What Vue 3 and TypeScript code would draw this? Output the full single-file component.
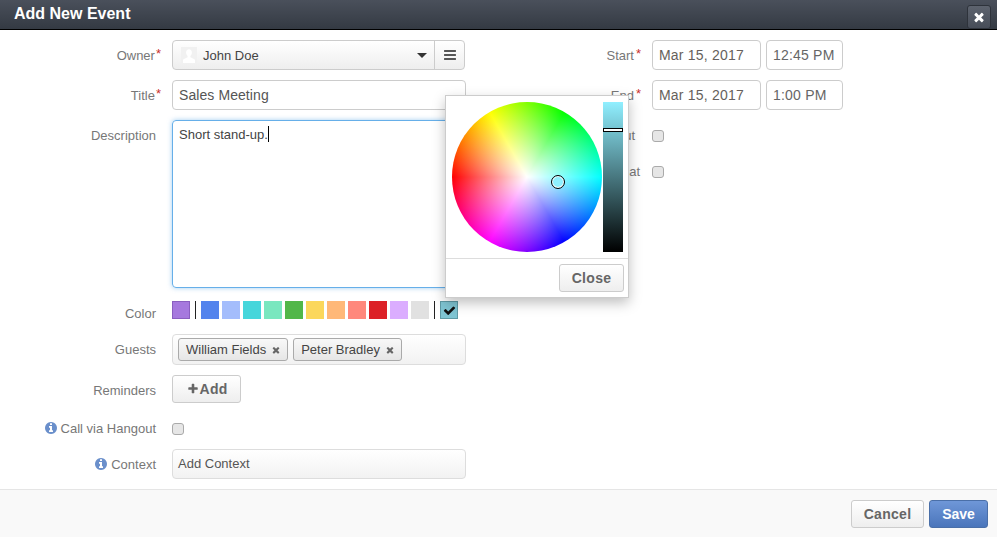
<script setup lang="ts">
const icons = {
  times: 'M1490 1322q0 40-28 68l-136 136q-28 28-68 28t-68-28l-294-294-294 294q-28 28-68 28t-68-28l-136-136q-28-28-28-68t28-68l294-294-294-294q-28-28-28-68t28-68l136-136q28-28 68-28t68 28l294 294 294-294q28-28 68-28t68 28l136 136q28 28 28 68t-28 68l-294 294 294 294q28 28 28 68z',
  check: 'M1671 566q0 40-28 68l-724 724-136 136q-28 28-68 28t-68-28l-136-136-362-362q-28-28-28-68t28-68l136-136q28-28 68-28t68 28l294 295 656-657q28-28 68-28t68 28l136 136q28 28 28 68z',
  plus: 'M1600 736v192q0 40-28 68t-68 28h-416v416q0 40-28 68t-68 28h-192q-40 0-68-28t-28-68v-416h-416q-40 0-68-28t-28-68v-192q0-40 28-68t68-28h416v-416q0-40 28-68t68-28h192q40 0 68 28t28 68v416h416q40 0 68 28t28 68z',
  info: 'M1152 1376v-160q0-14-9-23t-23-9h-96v-512q0-14-9-23t-23-9h-320q-14 0-23 9t-9 23v160q0 14 9 23t23 9h96v320h-96q-14 0-23 9t-9 23v160q0 14 9 23t23 9h448q14 0 23-9t9-23zm-128-896v-160q0-14-9-23t-23-9h-192q-14 0-23 9t-9 23v160q0 14 9 23t23 9h192q14 0 23-9t9-23zm640 416q0 209-103 385.5t-279.5 279.5-385.5 103-385.5-103-279.5-279.5-103-385.5 103-385.5 279.5-279.5 385.5-103 385.5 103 279.5 279.5 103 385.5z',
  bars: 'M1664 1344v128q0 26-19 45t-45 19h-1408q-26 0-45-19t-19-45v-128q0-26 19-45t45-19h1408q26 0 45 19t19 45zm0-512v128q0 26-19 45t-45 19h-1408q-26 0-45-19t-19-45v-128q0-26 19-45t45-19h1408q26 0 45 19t19 45zm0-512v128q0 26-19 45t-45 19h-1408q-26 0-45-19t-19-45v-128q0-26 19-45t45-19h1408q26 0 45 19t19 45z',
}
const firstSwatch = '#a679de'
const swatches: string[] = ['#5484ed', '#a4bdfc', '#46d6db', '#7ae7bf', '#51b749', '#fbd75b', '#ffb878', '#ff887c', '#dc2127', '#dbadff', '#e1e1e1']
const guests: string[] = ['William Fields', 'Peter Bradley']
</script>

<template>
  <div class="dialog">
    <header class="head">
      <h1 class="head-title">Add New Event</h1>
      <button class="head-close" type="button">
        <svg viewBox="0 0 1792 1792" class="ico-close"><path :d="icons.times" /></svg>
      </button>
    </header>

    <main class="body">
      <section class="col-left">
        <div class="row">
          <label class="lab">Owner<span class="req">*</span></label>
          <div class="owner">
            <div class="owner-select">
              <svg class="avatar" viewBox="0 0 16 16">
                <rect width="16" height="16" fill="#f1f1f1" />
                <path d="M8 2.200c1.800 0 2.900 1.500 2.900 3.400 0 1.500-.7 2.800-1.500 3.500v1.200l3.600 1.600c.8.4 1 1 1 1.600V16H2v-2.500c0-.6.2-1.200 1-1.600l3.600-1.600V9.100C5.800 8.400 5.100 7.100 5.100 5.600 5.100 3.700 6.200 2.200 8 2.200z" fill="#fff" />
              </svg>
              <span class="owner-name">John Doe</span>
              <span class="caret"></span>
            </div>
            <div class="owner-menu">
              <svg viewBox="0 0 1792 1792" class="ico-bars"><path :d="icons.bars" /></svg>
            </div>
          </div>
        </div>

        <div class="row">
          <label class="lab">Title<span class="req">*</span></label>
          <div class="input wide">Sales Meeting</div>
        </div>

        <div class="row row-top">
          <label class="lab lab-desc">Description</label>
          <div class="area">Short stand-up.<span class="text-caret"></span></div>
        </div>

        <div class="row row-color">
          <label class="lab lab-color">Color</label>
          <div class="swatches">
            <span class="swatch swatch-sel" :style="{ background: firstSwatch }"></span>
            <span class="sep"></span>
            <span v-for="c in swatches" :key="c" class="swatch" :style="{ background: c }"></span>
            <span class="sep sep-b"></span>
            <span class="swatch swatch-custom">
              <svg viewBox="0 0 1792 1792" class="ico-check"><path :d="icons.check" /></svg>
            </span>
          </div>
        </div>

        <div class="row row-guests">
          <label class="lab">Guests</label>
          <div class="guests">
            <span v-for="g in guests" :key="g" class="tag">
              {{ g }}
              <svg viewBox="0 0 1792 1792" class="ico-tag"><path :d="icons.times" /></svg>
            </span>
          </div>
        </div>

        <div class="row row-add">
          <label class="lab lab-rem">Reminders</label>
          <button class="btn btn-add" type="button">
            <svg viewBox="0 0 1792 1792" class="ico-plus"><path :d="icons.plus" /></svg>Add
          </button>
        </div>

        <div class="row row-check">
          <label class="lab">
            <svg viewBox="0 0 1792 1792" class="ico-info"><path :d="icons.info" /></svg>Call via Hangout
          </label>
          <span class="check"></span>
        </div>

        <div class="row">
          <label class="lab">
            <svg viewBox="0 0 1792 1792" class="ico-info"><path :d="icons.info" /></svg>Context
          </label>
          <div class="context">Add Context</div>
        </div>
      </section>

      <section class="col-right">
        <div class="row">
          <label class="lab-r">Start<span class="req">*</span></label>
          <div class="input date">Mar 15, 2017</div>
          <div class="input time">12:45 PM</div>
        </div>
        <div class="row">
          <label class="lab-r">End<span class="req">*</span></label>
          <div class="input date">Mar 15, 2017</div>
          <div class="input time">1:00 PM</div>
        </div>
        <div class="row row-opt">
          <label class="lab-r lab-out">Time Out</label>
          <span class="check"></span>
        </div>
        <div class="row row-opt">
          <label class="lab-r lab-rep">Repeat</label>
          <span class="check"></span>
        </div>
      </section>

      <div class="picker">
        <div class="picker-main">
          <div class="wheel"><span class="wheel-dot"></span></div>
          <div class="slider"><span class="slider-handle"></span></div>
        </div>
        <div class="picker-foot">
          <button class="btn btn-close" type="button">Close</button>
        </div>
      </div>
    </main>

    <footer class="foot">
      <button class="btn btn-cancel" type="button">Cancel</button>
      <button class="btn btn-save" type="button">Save</button>
    </footer>
  </div>
</template>

<style>
html, body { margin: 0; background: #fff; }
</style>

<style scoped>
.dialog {
  width: 997px;
  height: 537px;
  display: flex;
  flex-direction: column;
  overflow: hidden;
  background: #fff;
  font-family: "Liberation Sans", Arial, sans-serif;
  font-size: 13px;
  color: #555;
}
.head {
  height: 29px;
  flex: none;
  border-bottom: 1px solid #000;
  background: linear-gradient(#4a505b, #343a43);
  display: flex;
  align-items: flex-start;
  justify-content: space-between;
  padding: 0 6px 0 14px;
}
.head-title {
  margin: 0;
  font-size: 16px;
  line-height: 28px;
  font-weight: 700;
  color: #fff;
}
.head-close {
  width: 24px;
  height: 24px;
  margin-top: 5px;
  padding: 0;
  display: flex;
  align-items: center;
  justify-content: center;
  border: 1px solid #2e333b;
  border-radius: 3px;
  background: linear-gradient(#5d636e, #474d58);
}
.ico-close { width: 14px; height: 14px; fill: #fff; }

.body {
  flex: 1;
  position: relative;
  display: flex;
  padding-top: 10px;
  min-height: 0;
}
.col-left { width: 466px; flex: none; display: flex; flex-direction: column; gap: 10px; }
.col-right { display: flex; flex-direction: column; gap: 10px; }

.row { display: flex; align-items: center; min-height: 30px; }
.row-top { align-items: flex-start; }
.lab {
  width: 156px;
  margin-right: 16px;
  flex: none;
  text-align: right;
  color: #777;
  white-space: nowrap;
}
.lab-desc { padding-top: 8px; }
.lab-rem { position: relative; top: 1px; }
.req {
  color: #c9302c;
  margin-left: 1px;
  margin-right: -5px;
  position: relative;
  top: -2px;
  font-size: 13px;
}
.lab-r .req { margin-left: 2px; }

.owner {
  width: 293px;
  height: 30px;
  box-sizing: border-box;
  border: 1px solid #ccc;
  border-radius: 4px;
  display: flex;
  background: linear-gradient(#fff, #eee);
}
.owner-select { flex: 1; display: flex; align-items: center; padding-left: 8px; padding-right: 7px; }
.avatar { width: 16px; height: 16px; flex: none; margin-right: 6px; }
.owner-name { flex: 1; color: #444; }
.caret {
  width: 0;
  height: 0;
  border-left: 5px solid transparent;
  border-right: 5px solid transparent;
  border-top: 5px solid #333;
}
.owner-menu {
  width: 29px;
  border-left: 1px solid #ccc;
  display: flex;
  align-items: center;
  justify-content: center;
}
.ico-bars { width: 14px; height: 14px; fill: #555; }

.input {
  height: 30px;
  box-sizing: border-box;
  border: 1px solid #ccc;
  border-radius: 4px;
  padding: 0 6px;
  line-height: 28px;
  font-size: 14px;
  background: #fff;
  white-space: nowrap;
}
.wide { width: 294px; letter-spacing: .08px; }
.area {
  width: 294px;
  height: 168px;
  box-sizing: border-box;
  border: 1px solid #66afe9;
  border-radius: 4px;
  padding: 5px 6px;
  line-height: 17px;
  color: #444;
  box-shadow: 0 0 5px rgba(102, 175, 233, .6);
}
.text-caret {
  display: inline-block;
  width: 1px;
  height: 16px;
  background: #000;
  vertical-align: -3px;
}

.row-color { min-height: 18px; margin-top: 3px; }
.lab-color { position: relative; top: 3px; }
.swatches { display: flex; align-items: center; height: 18px; gap: 3px; }
.swatch { width: 18px; height: 18px; box-sizing: border-box; display: block; }
.swatch-sel { border: 1px solid #8a5fc0; margin-right: 2px; }
.sep { width: 1px; height: 18px; background: #222; margin-right: 2px; }
.sep-b { margin-left: 2px; }
.swatch-custom {
  background: #7fc5d3;
  border: 1px solid #5f9aa5;
  display: flex;
  align-items: center;
  justify-content: center;
}
.ico-check { width: 13px; height: 13px; fill: #111; }

.row-guests { margin-top: 5px; min-height: 31px; }
.guests {
  width: 294px;
  height: 31px;
  box-sizing: border-box;
  border: 1px solid #ddd;
  border-radius: 4px;
  padding: 3px 5px;
  display: flex;
  gap: 5px;
  background: linear-gradient(#fff, #f2f2f2);
}
.tag {
  height: 23px;
  box-sizing: border-box;
  border: 1px solid #aaa;
  border-radius: 3px;
  padding: 0 6px 0 7px;
  line-height: 21px;
  display: flex;
  align-items: center;
  gap: 5px;
  color: #444;
  background: linear-gradient(#f8f8f8, #e6e6e6);
}
.ico-tag { width: 10px; height: 10px; fill: #666; }

.row-add { min-height: 28px; }
.btn {
  box-sizing: border-box;
  border: 1px solid #ccc;
  border-radius: 3px;
  background: linear-gradient(#fff, #eee);
  color: #666;
  font: 700 14px "Liberation Sans", Arial, sans-serif;
  padding: 0;
  display: flex;
  align-items: center;
  justify-content: center;
}
.btn-add { width: 69px; height: 28px; font-size: 14px; letter-spacing: .2px; padding-left: 1px; }
.ico-plus { width: 12px; height: 12px; fill: #666; margin-right: 1px; }

.row-check { min-height: 26px; }
.check {
  width: 12px;
  height: 12px;
  box-sizing: border-box;
  border: 1px solid #aaa;
  border-radius: 3px;
  background: #e6e6e6;
  position: relative;
  top: 3px;
  display: block;
}
.row-check .lab { position: relative; top: 2px; }
.ico-info { width: 14px; height: 14px; fill: #6a8fcb; vertical-align: -2px; margin-right: 3px; }

.context {
  width: 294px;
  height: 30px;
  box-sizing: border-box;
  border: 1px solid #ddd;
  border-radius: 4px;
  padding: 0 5px;
  line-height: 28px;
  color: #555;
  background: linear-gradient(#fff, #f2f2f2);
}

.col-right .row { gap: 5px; }
.lab-r {
  width: 170px;
  margin-right: 11px;
  flex: none;
  text-align: right;
  color: #777;
  box-sizing: border-box;
  white-space: nowrap;
}
.lab-out { padding-right: 1px; position: relative; top: 2px; }
.lab-rep { width: 174px; margin-right: 7px; position: relative; top: 2px; }
.date { width: 109px; color: #665f5c; letter-spacing: .2px; }
.time { width: 77px; color: #666; letter-spacing: .2px; }
.row-opt { min-height: 26px; }

.picker {
  position: absolute;
  left: 445px;
  top: 65px;
  width: 184px;
  height: 203px;
  box-sizing: border-box;
  border: 1px solid #ccc;
  background: #fff;
  box-shadow: 0 5px 12px rgba(0, 0, 0, .25);
  display: flex;
  flex-direction: column;
}
.picker-main {
  height: 163px;
  flex: none;
  box-sizing: border-box;
  padding: 6px 5px 0 6px;
  display: flex;
  gap: 1px;
  border-bottom: 1px solid #ddd;
}
.wheel {
  width: 150px;
  height: 150px;
  flex: none;
  border-radius: 50%;
  position: relative;
  background:
    radial-gradient(circle closest-side, #fff 0%, rgba(255, 255, 255, 0) 100%),
    conic-gradient(from 270deg, #f00, #ff0, #0f0, #0ff, #00f, #f0f, #f00);
}
.wheel-dot {
  position: absolute;
  left: 99px;
  top: 73px;
  width: 14px;
  height: 14px;
  box-sizing: border-box;
  border: 1px solid #000;
  border-radius: 50%;
  background: #8ef0ff;
  box-shadow: inset 0 0 0 1px #fff;
}
.slider {
  width: 20px;
  height: 150px;
  position: relative;
  background: linear-gradient(#90efff, #000);
}
.slider-handle {
  position: absolute;
  left: 0;
  right: 0;
  top: 26px;
  height: 4px;
  border: 1px solid #000;
  box-sizing: border-box;
  background: #fff;
}
.picker-foot {
  flex: 1;
  display: flex;
  justify-content: flex-end;
  align-items: flex-start;
  padding: 5px 4px 0 0;
}
.btn-close { width: 65px; height: 28px; letter-spacing: .3px; }

.foot {
  height: 48px;
  flex: none;
  box-sizing: border-box;
  border-top: 1px solid #e5e5e5;
  background: #f9f9f9;
  display: flex;
  justify-content: flex-end;
  align-items: flex-start;
  gap: 5px;
  padding: 10px 9px 0 0;
}
.btn-cancel { width: 73px; height: 28px; letter-spacing: .3px; }
.btn-save {
  width: 59px;
  height: 28px;
  color: #fff;
  border-color: #4a6fa8;
  background: linear-gradient(#6f97d8, #4a75bb);
}
</style>
